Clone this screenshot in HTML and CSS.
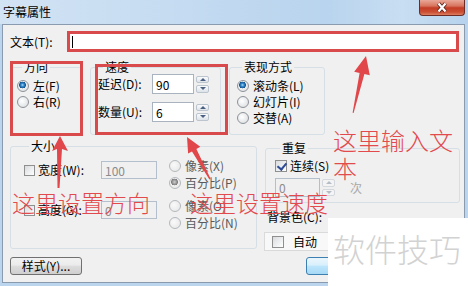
FILE: index.html
```html
<!DOCTYPE html>
<html lang="zh-CN">
<head>
  <meta charset="UTF-8" />
  <meta name="viewport" content="width=device-width, initial-scale=1" />
  <title>字幕属性</title>
  <link rel="stylesheet" href="styles.css">
</head>
<body>

  <div class="window">
    <header class="titlebar">
      <span class="title">字幕属性</span>
      <button class="close-btn" aria-label="关闭">
        <svg width="16" height="11" viewBox="0 0 16 11">
          <path class="x-shadow" d="M4.5 1.5 L11.5 9.5 M11.5 1.5 L4.5 9.5" />
          <path class="x-mark" d="M4.5 1.5 L11.5 9.5 M11.5 1.5 L4.5 9.5" />
        </svg>
      </button>
    </header>

    <div class="dialog">
      <div class="text-row">
        <label for="subText">文本(T):</label>
        <div class="text-box">
          <span class="caret"></span>
          <input type="text" id="subText" />
        </div>
      </div>

      <div class="row-top">
        <fieldset class="group group-dir">
          <legend>方向</legend>
          <label class="opt"><input type="radio" name="dir" checked /> 左(F)</label>
          <label class="opt"><input type="radio" name="dir" /> 右(R)</label>
        </fieldset>

        <fieldset class="group group-speed">
          <legend>速度</legend>
          <div class="field-row">
            <label>延迟(D):</label>
            <input type="text" class="num" value="90" />
            <span class="spin"><i class="up"></i><i class="down"></i></span>
          </div>
          <div class="field-row">
            <label>数量(U):</label>
            <input type="text" class="num" value="6" />
            <span class="spin"><i class="up"></i><i class="down"></i></span>
          </div>
        </fieldset>

        <fieldset class="group group-mode">
          <legend>表现方式</legend>
          <label class="opt"><input type="radio" name="mode" checked /> 滚动条(L)</label>
          <label class="opt"><input type="radio" name="mode" /> 幻灯片(I)</label>
          <label class="opt"><input type="radio" name="mode" /> 交替(A)</label>
        </fieldset>
      </div>

      <div class="row-bottom">
        <fieldset class="group group-size">
          <legend>大小</legend>
          <div class="size-row">
            <div class="size-field">
              <label class="size-label"><input type="checkbox" /> 宽度(W):</label>
              <input type="text" class="num size-num" value="100" disabled />
            </div>
            <div class="units">
              <label class="opt off"><input type="radio" name="wu" disabled /> 像素(X)</label>
              <label class="opt off"><input type="radio" name="wu" checked disabled /> 百分比(P)</label>
            </div>
          </div>
          <div class="size-row">
            <div class="size-field">
              <label class="size-label"><input type="checkbox" /> 高度(G):</label>
              <input type="text" class="num size-num" value="0" disabled />
            </div>
            <div class="units">
              <label class="opt off"><input type="radio" name="hu" disabled /> 像素(O)</label>
              <label class="opt off"><input type="radio" name="hu" disabled /> 百分比(N)</label>
            </div>
          </div>
        </fieldset>

        <div class="side">
          <fieldset class="group group-repeat">
            <legend>重复</legend>
            <label class="opt"><input type="checkbox" checked /> 连续(S)</label>
            <div class="repeat-row">
              <input type="text" class="num repeat-num" value="0" disabled />
              <span class="spin off"><i class="up"></i><i class="down"></i></span>
              <span class="times">次</span>
            </div>
          </fieldset>
          <div class="bg-label">背景色(C):</div>
          <div class="bg-box">
            <label class="opt"><input type="checkbox" /> 自动</label>
          </div>
        </div>
      </div>

      <div class="footer">
        <button class="btn btn-style">样式(Y)...</button>
        <button class="btn btn-ok">确定</button>
      </div>
    </div>

    <!-- 标注 -->
    <div class="mark mark-dir"></div>
    <div class="mark mark-speed"></div>

    <svg class="arrows" width="468" height="286" viewBox="0 0 468 286">
      <polygon points="60,136 68,151 62,149 59.5,188 57.5,188 57,149 52,151" />
      <polygon points="187,137 200.3,146.8 196.4,149 210.6,178.8 209.4,179.4 192,151.4 188.1,153.6" />
      <polygon points="366,56 369.8,75.3 364.4,74.1 353.6,113 352.6,112.8 359.6,72.9 354.2,71.7" />
    </svg>

    <div class="note note-dir">这里设置方向</div>
    <div class="note note-speed">这里设置速度</div>
    <div class="note note-text">这里输入文本</div>

    <div class="watermark">软件技巧</div>
  </div>

</body>
</html>
```

FILE: styles.css
```css
* {
  box-sizing: border-box;
}

body {
  margin: 0;
  font-family: "Noto Sans CJK SC", sans-serif;
  font-size: 12px;
  color: #000;
  background-color: #ffffff;
}

.window {
  position: relative;
  width: 468px;
  height: 286px;
  overflow: hidden;
  background-color: #bcd5ee;
}

/* 标题栏 */
.titlebar {
  height: 24px;
  display: flex;
  align-items: flex-start;
  background: linear-gradient(to right, #d2e3f4 0%, #c4dbf1 40%, #b9d4ee 70%, #c8def2 86%, #b6d2ed 100%);
}

.title {
  margin: 5px 0 0 3px;
  line-height: 14px;
}

.close-btn {
  margin-left: auto;
  margin-right: 3px;
  width: 46px;
  height: 16px;
  padding: 0;
  display: flex;
  align-items: center;
  justify-content: center;
  border: 1px solid #6e2c24;
  border-top: none;
  border-radius: 0 0 4px 4px;
  background: linear-gradient(#e9a898 0%, #d8745e 40%, #c23d25 52%, #cb4f33 80%, #dc7d60 100%);
}

.close-btn .x-shadow {
  stroke: #5b241d;
  stroke-width: 4;
  fill: none;
}

.close-btn .x-mark {
  stroke: #ffffff;
  stroke-width: 2.2;
  fill: none;
}

/* 对话框主体 */
.dialog {
  margin: 0 3px 0 2px;
  height: 259px;
  padding: 6px 0 0 7px;
  border: 1px solid #8a9bb0;
  background-color: #f0f0f0;
}

.text-row {
  display: flex;
  align-items: center;
  height: 21px;
}

.text-row label {
  width: 57px;
  line-height: 14px;
}

.text-box {
  width: 392px;
  height: 21px;
  display: flex;
  align-items: center;
  padding-left: 2px;
  border: 3px solid #d94a4d;
  background-color: #ffffff;
}

.caret {
  width: 1px;
  height: 12px;
  background-color: #000;
}

.text-box input {
  flex: 1;
  border: none;
  outline: none;
  background: transparent;
  font: inherit;
}

/* 分组框 */
.group {
  margin: 0;
  min-width: 0;
  border: 1px solid #d5dfe5;
  border-radius: 3px;
}

.group legend {
  margin-left: 5px;
  padding: 0 2px;
  line-height: 14px;
}

.row-top {
  display: flex;
  gap: 8px;
  height: 75px;
  margin-top: 8px;
}

.group-dir {
  width: 72px;
  padding: 4px 0 0 6px;
}

.group-speed {
  width: 131px;
  padding: 0 0 0 7px;
}

.group-mode {
  width: 96px;
  padding: 4px 0 0 7px;
}

.opt {
  display: flex;
  align-items: center;
  gap: 4px;
  height: 16px;
  white-space: nowrap;
  line-height: 14px;
}

.opt.off {
  color: #5a5a5a;
  height: 17px;
}

.field-row {
  display: flex;
  align-items: center;
  height: 20px;
}

.field-row + .field-row {
  margin-top: 8px;
}

.field-row label {
  width: 54px;
  white-space: nowrap;
  line-height: 14px;
}

.num {
  width: 42px;
  height: 20px;
  padding: 0 0 0 3px;
  border: 1px solid #a9b3bf;
  background-color: #ffffff;
  font: inherit;
  color: #000;
}

.num:disabled {
  background-color: #f0f0f0;
  color: #8c8c8c;
  border-color: #b3bfcd;
}

/* 微调按钮 */
.spin {
  display: flex;
  flex-direction: column;
  gap: 2px;
  width: 13px;
  height: 19px;
  margin-left: 2px;
  padding: 1px 0;
}

.spin i {
  flex: 1;
  display: flex;
  align-items: center;
  justify-content: center;
  border: 1px solid #bcc4ce;
  border-radius: 2px;
  background: linear-gradient(#fafbfc, #dde3ea);
}

.spin i::after {
  content: "";
  border-left: 3px solid transparent;
  border-right: 3px solid transparent;
}

.spin .up::after {
  border-bottom: 3px solid #4b5f80;
}

.spin .down::after {
  border-top: 3px solid #4b5f80;
}

.spin.off i {
  border-color: #d3d8de;
  background: #f4f4f4;
}

.spin.off .up::after {
  border-bottom-color: #b5bcc6;
}

.spin.off .down::after {
  border-top-color: #b5bcc6;
}

/* 单选与复选 */
input[type="radio"] {
  appearance: none;
  -webkit-appearance: none;
  flex: none;
  width: 12px;
  height: 12px;
  margin: 0;
  border: 1px solid #8d9298;
  border-radius: 50%;
  background: radial-gradient(circle at 40% 40%, #ffffff, #d6d9dd);
}

input[type="radio"]:checked {
  background:
    radial-gradient(circle at 45% 40%, #a9dcf8 0, #2c86cc 1.6px, #175591 3.2px, transparent 3.6px),
    radial-gradient(circle at 40% 40%, #ffffff, #d6d9dd);
}

input[type="radio"]:disabled {
  border-color: #b4b8bc;
  background: radial-gradient(circle at 40% 40%, #fafafa, #e4e4e4);
}

input[type="radio"]:checked:disabled {
  background:
    radial-gradient(circle at 45% 40%, #d2d2d2 0, #9a9a9a 2px, #7d7d7d 3.2px, transparent 3.6px),
    radial-gradient(circle at 40% 40%, #fafafa, #e4e4e4);
}

input[type="checkbox"] {
  appearance: none;
  -webkit-appearance: none;
  position: relative;
  flex: none;
  width: 12px;
  height: 12px;
  margin: 0;
  border: 1px solid #8f8f8f;
  background: linear-gradient(135deg, #d9dbde, #ffffff);
}

input[type="checkbox"]:checked::after {
  content: "";
  position: absolute;
  left: 3px;
  top: 0;
  width: 4px;
  height: 7px;
  border: solid #2d4c95;
  border-width: 0 2px 2px 0;
  transform: rotate(40deg);
}

/* 下半部分 */
.row-bottom {
  display: flex;
  gap: 8px;
  height: 110px;
  margin-top: 4px;
}

.group-size {
  width: 247px;
  padding: 4px 0 0 13px;
}

.size-row {
  display: flex;
  align-items: flex-start;
}

.size-row + .size-row {
  margin-top: 6px;
}

.size-field {
  display: flex;
  align-items: center;
  margin-top: 4px;
}

.size-label {
  display: flex;
  align-items: center;
  gap: 3px;
  width: 77px;
  white-space: nowrap;
  line-height: 14px;
}

.size-label input[type="checkbox"] {
  width: 11px;
  height: 11px;
}

.size-num {
  width: 56px;
  height: 18px;
}

.units {
  margin-left: 12px;
}

.side {
  width: 195px;
  margin-top: 2px;
  display: flex;
  flex-direction: column;
}

.group-repeat {
  height: 62px;
  flex: none;
  padding: 3px 0 0 9px;
}

.group-repeat .opt {
  gap: 3px;
}

.repeat-row {
  display: flex;
  align-items: center;
  margin-top: 4px;
}

.repeat-num {
  width: 45px;
  height: 19px;
}

.times {
  margin-left: 15px;
  color: #a8a8a8;
}

.bg-label {
  margin: 7px 0 0 2px;
  line-height: 14px;
}

.bg-box {
  flex: none;
  width: 136px;
  height: 19px;
  margin: 8px 0 0 -1px;
  padding-left: 7px;
  display: flex;
  align-items: center;
  border: 1px solid #dadada;
  background-color: #f8f8f8;
}

.bg-box .opt {
  gap: 9px;
}

/* 按钮 */
.footer {
  display: flex;
  margin-top: 8px;
}

.btn {
  width: 72px;
  height: 18px;
  padding: 0;
  font: inherit;
  line-height: 14px;
  border: 1px solid #707070;
  border-radius: 3px;
  background: linear-gradient(#f2f2f2 0%, #ebebeb 45%, #dddddd 50%, #cfcfcf 100%);
}

.btn-ok {
  margin-left: 224px;
  border-color: #3c7fb1;
  background: linear-gradient(#eaf6fd 0%, #d9f0fc 45%, #bee6fd 50%, #a7d9f5 100%);
}

/* 红色标注 */
.mark {
  position: absolute;
  border: 3px solid #d94a4d;
}

.mark-dir {
  left: 10px;
  top: 61px;
  width: 73px;
  height: 75px;
}

.mark-speed {
  left: 95px;
  top: 64px;
  width: 133px;
  height: 71px;
}

.arrows {
  position: absolute;
  left: 0;
  top: 0;
  pointer-events: none;
}

.arrows polygon {
  fill: #e0464a;
}

.note {
  position: absolute;
  color: #e24a4e;
  font-size: 23px;
  font-weight: 300;
  line-height: 27px;
  white-space: nowrap;
}

.note-dir {
  left: 12px;
  top: 189px;
}

.note-speed {
  left: 190px;
  top: 189px;
}

.note-text {
  left: 333px;
  top: 126px;
  width: 125px;
  font-size: 24px;
  line-height: 28px;
  white-space: normal;
}

.watermark {
  position: absolute;
  left: 328px;
  top: 218px;
  right: 0;
  bottom: 0;
  padding: 10px 0 0 5px;
  background-color: #ffffff;
  color: #d2d2d2;
  font-size: 32px;
  font-weight: 300;
  line-height: 40px;
}
```
